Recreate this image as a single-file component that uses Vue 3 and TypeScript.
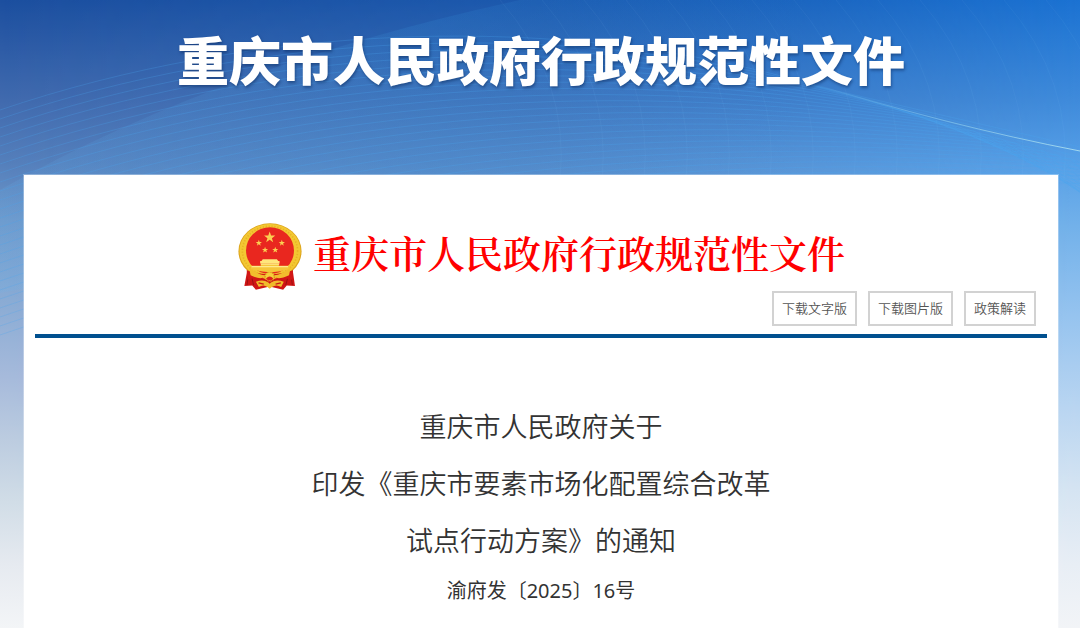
<script setup lang="ts">
interface Action {
  label: string
}

const siteTitle = '重庆市人民政府行政规范性文件'
const actions: Action[] = [{ label: '下载文字版' }, { label: '下载图片版' }, { label: '政策解读' }]
const headingLines: string[] = ['重庆市人民政府关于', '印发《重庆市要素市场化配置综合改革', '试点行动方案》的通知']

const waves: string[] = Array.from({ length: 26 }, (_, i) => {
  const left = 110 + i * 9
  return `M0 ${left} C 250 ${left - 85} 560 ${8 + i * 6} ${820 + i * 14} ${87 + i * 4} T 1180 ${170 + i * 7}`
})

const ribs: string[] = Array.from({ length: 14 }, (_, i) => {
  const x = 560 + i * 42
  return `M${x} 180 Q ${x + 10} 80 ${x - 60} 0`
})

function star(cx: number, cy: number, r: number): string {
  return Array.from({ length: 10 }, (_, i) => {
    const radius = i % 2 === 0 ? r : r * 0.4
    const a = (Math.PI / 5) * i - Math.PI / 2
    return `${(cx + radius * Math.cos(a)).toFixed(1)},${(cy + radius * Math.sin(a)).toFixed(1)}`
  }).join(' ')
}

const stars: string[] = [
  star(125, 81, 18),
  star(92, 98, 10),
  star(162, 98, 10),
  star(111, 119, 10),
  star(142, 119, 10),
]
</script>

<template>
  <div class="page">
    <svg class="backdrop" viewBox="0 0 1080 628" preserveAspectRatio="none" aria-hidden="true">
      <defs>
        <linearGradient id="skyLeft" x1="0" y1="0" x2="0" y2="1">
          <stop offset="0" stop-color="#1c4f9f" />
          <stop offset="0.16" stop-color="#416aae" />
          <stop offset="0.26" stop-color="#557fbb" />
          <stop offset="0.35" stop-color="#6e98ca" />
          <stop offset="0.46" stop-color="#86a9d3" />
          <stop offset="0.6" stop-color="#a6badb" />
          <stop offset="0.7" stop-color="#bccce0" />
          <stop offset="0.8" stop-color="#d1dde7" />
          <stop offset="0.9" stop-color="#e6eaf0" />
          <stop offset="1" stop-color="#f3f5f7" />
        </linearGradient>
        <linearGradient id="skyRight" x1="0" y1="0" x2="0" y2="1">
          <stop offset="0" stop-color="#1b72d2" />
          <stop offset="0.16" stop-color="#3f8bdb" />
          <stop offset="0.26" stop-color="#57a0e7" />
          <stop offset="0.36" stop-color="#72b1ea" />
          <stop offset="0.5" stop-color="#95c3ef" />
          <stop offset="0.65" stop-color="#b9d5f1" />
          <stop offset="0.78" stop-color="#d5e4f2" />
          <stop offset="0.9" stop-color="#e8eef5" />
          <stop offset="1" stop-color="#f2f4f7" />
        </linearGradient>
        <linearGradient id="across" x1="0" y1="0" x2="1" y2="0">
          <stop offset="0" stop-color="#000" />
          <stop offset="0.5" stop-color="#4a4a4a" />
          <stop offset="0.8" stop-color="#bbb" />
          <stop offset="1" stop-color="#fff" />
        </linearGradient>
        <linearGradient id="glow" x1="0" y1="0" x2="1" y2="0">
          <stop offset="0" stop-color="#68b4ee" stop-opacity="0.14" />
          <stop offset="0.4" stop-color="#3a98e0" stop-opacity="0.16" />
          <stop offset="0.75" stop-color="#2c93e4" stop-opacity="0" />
        </linearGradient>
        <linearGradient id="ridge" x1="0" y1="0" x2="1" y2="0">
          <stop offset="0" stop-color="#7cc4ee" stop-opacity="0" />
          <stop offset="0.5" stop-color="#8acbed" stop-opacity="0.6" />
          <stop offset="1" stop-color="#a4d9ee" />
        </linearGradient>
        <mask id="fade"><rect width="1080" height="628" fill="url(#across)" /></mask>
      </defs>
      <rect width="1080" height="628" fill="url(#skyLeft)" />
      <rect width="1080" height="628" fill="url(#skyRight)" mask="url(#fade)" />
      <path d="M0 190 Q 220 65 520 0 H1080 V288 H26 L0 293Z" fill="url(#glow)" />
      <g fill="none" stroke="#4ba8ee" stroke-opacity="0.26">
        <path v-for="(d, i) in waves" :key="i" :d="d" />
      </g>
      <g fill="none" stroke="#7fb9ee" stroke-opacity="0.08">
        <path v-for="(d, i) in ribs" :key="i" :d="d" />
      </g>
      <path d="M800 80 Q 950 126 1080 151" fill="none" stroke="url(#ridge)" />
    </svg>

    <header class="banner">
      <h1 class="banner-title">{{ siteTitle }}</h1>
    </header>

    <main class="card">
      <div class="masthead">
        <svg class="emblem" viewBox="28 34 196 210" aria-hidden="true">
          <path d="M57 180 L48 229 L72 227 L83 240 L125 230 L166 240 L177 227 L202 229 L195 180Z" fill="#cf1515" />
          <path d="M70 200 L76 226 M181 200 L174 226 M60 196 L56 226 M190 196 L194 226" stroke="#9c1011" stroke-width="3" />
          <ellipse cx="126" cy="123" rx="96" ry="85" fill="#dca21a" />
          <ellipse cx="126" cy="122" rx="93" ry="82" fill="#f3c832" />
          <ellipse cx="126" cy="122" rx="84" ry="75" fill="none" stroke="#e8b226" stroke-width="5" stroke-dasharray="4 5" />
          <ellipse cx="126" cy="121" rx="73" ry="71" fill="#e9271f" />
          <path d="M55 181 Q88 193 125 193 Q162 193 196 181 L193 210 Q155 198 125 212 Q96 198 58 210Z" fill="#d21716" />
          <path d="M62 172 Q92 196 111 196 Q125 182 139 196 Q160 196 189 172 L184 196 Q158 208 146 204 Q125 219 104 204 Q91 208 67 196Z" fill="#f2bd2d" />
          <circle cx="125" cy="200" r="14" fill="#f6cf3b" stroke="#d58c16" stroke-width="4" stroke-dasharray="4 4" />
          <path d="M114 206 Q125 194 136 206 L130 212 H120Z" fill="#dc251b" />
          <path d="M83 216 Q105 207 121 218 L125 222 L129 218 Q145 207 168 216 L160 232 Q145 222 132 232 L125 237 L118 232 Q106 222 92 232Z" fill="#f0bb2a" />
          <path d="M91 219 L107 223 M159 219 L143 223" stroke="#c91c16" stroke-width="4" />
          <path d="M104 147 H147 L151 153 H155 V160 H96 V153 H100Z" fill="#ffe67b" />
          <path d="M98 160 H153 V167 H183 V178 Q150 187 125 187 Q100 187 68 178 V167 H98Z" fill="#f5c63a" />
          <path d="M98 162 H154 M70 170 H181" stroke="#ffe98d" stroke-width="4" />
          <polygon v-for="(points, i) in stars" :key="i" :points="points" fill="#fbd052" />
        </svg>
        <h2 class="masthead-title">{{ siteTitle }}</h2>
      </div>

      <nav class="actions" aria-label="文件操作">
        <button v-for="action in actions" :key="action.label" type="button" class="action">{{ action.label }}</button>
      </nav>

      <article class="document">
        <h3 class="document-title">
          <span v-for="line in headingLines" :key="line" class="document-line">{{ line }}</span>
        </h3>
        <p class="document-number">渝府发〔2025〕16号</p>
      </article>
    </main>
  </div>
</template>

<style>
body {
  margin: 0;
}
</style>

<style scoped>
.page {
  position: relative;
  display: flex;
  flex-direction: column;
  min-height: 100vh;
  box-sizing: border-box;
  padding: 0 22px 0 24px;
  font-family: "Noto Sans", "Noto Sans CJK SC", sans-serif;
  color: #333;
}

.backdrop {
  position: absolute;
  inset: 0;
  width: 100%;
  height: 100%;
}

.banner {
  position: relative;
  padding: 21px 0 78px;
}

.banner-title {
  margin: 0;
  font-family: "Noto Sans CJK SC", sans-serif;
  font-size: 52px;
  line-height: 76px;
  font-weight: 900;
  text-align: center;
  color: #fff;
  text-shadow: 1px 2px 3px rgba(10, 40, 90, 0.5);
}

.card {
  position: relative;
  flex: 1;
  padding: 47px 11px 20px;
  background: #fff;
  box-shadow: 0 0 0 1px rgba(255, 255, 255, 0.3);
}

.masthead {
  display: flex;
  justify-content: center;
  gap: 10px;
}

.emblem {
  width: 66px;
  height: 69px;
}

.masthead-title {
  margin: 0;
  font-family: "Noto Serif CJK SC", "Source Han Serif SC", "SimSun", "Noto Sans CJK SC", serif;
  font-size: 38px;
  line-height: 60px;
  font-weight: 600;
  color: #f00;
}

.actions {
  display: flex;
  justify-content: flex-end;
  gap: 11px;
  padding: 0 11px 8px;
  border-bottom: 4px solid #00508f;
}

.action {
  height: 35px;
  padding: 0 8px 2px;
  border: 2px solid #d2d2d2;
  background: #fff;
  font-family: "Noto Sans CJK SC", sans-serif;
  font-size: 13px;
  font-weight: 350;
  color: #555;
  cursor: pointer;
}

.document {
  padding-top: 60px;
  text-align: center;
}

.document-title {
  margin: 0;
  font-size: 27px;
  line-height: 57px;
  font-weight: 350;
}

.document-line {
  display: block;
}

.document-number {
  margin: 7px 0 0;
  font-size: 20px;
  line-height: 30px;
  font-weight: 400;
}
</style>
